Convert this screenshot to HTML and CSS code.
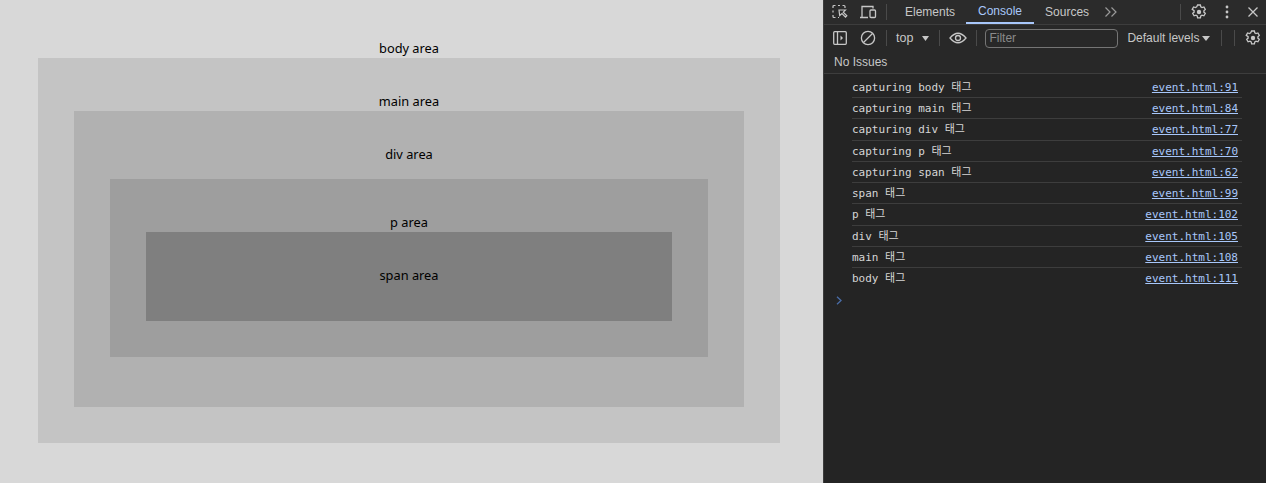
FILE: index.html
```html
<!DOCTYPE html>
<html lang="ko">
<head>
<meta charset="utf-8">
<title>event.html</title>
<link rel="stylesheet" href="styles.css">
</head>
<body>
<div class="page">
  <section class="box box-body">
    <div class="label">body area</div>
    <div class="box box-main">
      <div class="label">main area</div>
      <div class="box box-div">
        <div class="label">div area</div>
        <div class="box box-p">
          <div class="label">p area</div>
          <div class="box box-span"><div class="label">span area</div></div>
        </div>
      </div>
    </div>
  </section>
  <aside class="devtools">
    <div class="tabbar">
      <svg class="icon" width="18" height="18" viewBox="0 0 18 18"><path d="M2 5V3.500q0-1 1-1h1.500M7 2.500h2M11.500 2.500H13q1 0 1 1V5M2 7.500v2M2 12v1.500q0 1 1 1h1.500M7 14.500h1" fill="none" stroke="#c7c7c7" stroke-width="1.200"/><path d="M8 7h6.500l-2.200 2.200 3.500 3.600-1.300 1.300-3.500-3.600L8.700 12.500Z" fill="none" stroke="#c7c7c7" stroke-width="1.200"/></svg>
      <svg class="icon icon-device" width="18" height="18" viewBox="0 0 18 18"><path d="M1 14.500h8M3 14V3.500h11v2" fill="none" stroke="#c7c7c7" stroke-width="1.300"/><rect x="11" y="7" width="5.500" height="7.500" rx="1" fill="none" stroke="#c7c7c7" stroke-width="1.300"/></svg>
      <span class="vsep vsep-tabs"></span>
      <span class="tab tab-elements">Elements</span>
      <span class="tab tab-active">Console</span>
      <span class="tab tab-sources">Sources</span>
      <svg class="icon icon-more" width="14" height="12" viewBox="0 0 14 12"><path d="M1.500 1.500 6 6l-4.500 4.500M7.500 1.500 12 6l-4.500 4.500" fill="none" stroke="#9a9a9a" stroke-width="1.200"/></svg>
      <span class="spacer"></span>
      <span class="vsep"></span>
      <svg class="icon icon-gear1" width="16" height="16" viewBox="0 0 16 16"><path d="M6.600 1h2.800l.4 1.900 1.200.7 1.900-.6 1.400 2.400-1.400 1.300v1.400l1.400 1.300-1.400 2.400-1.900-.6-1.200.7-.4 1.900H6.600l-.4-1.900-1.200-.7-1.900.6-1.400-2.400 1.400-1.300V6.700L1.200 5.400 2.600 3l1.900.6 1.200-.7Z" fill="none" stroke="#c7c7c7" stroke-width="1.300"/><circle cx="8" cy="8" r="2.200" fill="#c7c7c7"/></svg>
      <svg class="icon icon-dots" width="4" height="14" viewBox="0 0 4 14"><circle cx="2" cy="2" r="1.400" fill="#c7c7c7"/><circle cx="2" cy="7" r="1.400" fill="#c7c7c7"/><circle cx="2" cy="12" r="1.400" fill="#c7c7c7"/></svg>
      <svg class="icon icon-close" width="12" height="12" viewBox="0 0 12 12"><path d="M1.500 1.500l9 9M10.500 1.500l-9 9" fill="none" stroke="#c7c7c7" stroke-width="1.300"/></svg>
    </div>
    <div class="toolbar">
      <svg class="icon icon-sidebar" width="14" height="14" viewBox="0 0 14 14"><rect x=".7" y=".7" width="12.600" height="12.600" rx="1" fill="none" stroke="#c7c7c7" stroke-width="1.300"/><path d="M4.500 1v12" stroke="#c7c7c7" stroke-width="1.300"/><path d="M7.500 4.500 10 7l-2.500 2.500Z" fill="#c7c7c7"/></svg>
      <svg class="icon icon-clear" width="16" height="16" viewBox="0 0 16 16"><circle cx="8" cy="8" r="6.600" fill="none" stroke="#c7c7c7" stroke-width="1.300"/><path d="M3.500 12.500l9-9" stroke="#c7c7c7" stroke-width="1.300"/></svg>
      <span class="vsep vsep-a"></span>
      <span class="top">top</span>
      <svg class="caret caret-top" width="7" height="5" viewBox="0 0 7 5"><path d="M0 0h7L3.500 5Z" fill="#c7c7c7"/></svg>
      <span class="vsep vsep-b"></span>
      <svg class="icon icon-eye" width="18" height="12" viewBox="0 0 18 12"><path d="M1 6q8-9.500 16 0-8 9.500-16 0Z" fill="none" stroke="#c7c7c7" stroke-width="1.300"/><circle cx="9" cy="6" r="2.500" fill="none" stroke="#c7c7c7" stroke-width="1.300"/></svg>
      <span class="vsep vsep-c"></span>
      <div class="filter">Filter</div>
      <span class="levels">Default levels</span>
      <svg class="caret caret-levels" width="8" height="5" viewBox="0 0 8 5"><path d="M0 0h8L4 5Z" fill="#c7c7c7"/></svg>
      <span class="vsep vsep-d"></span>
      <span class="vsep vsep-e"></span>
      <svg class="icon icon-gear2" width="16" height="16" viewBox="0 0 16 16"><path d="M6.600 1h2.800l.4 1.900 1.200.7 1.900-.6 1.400 2.400-1.400 1.300v1.400l1.400 1.300-1.400 2.400-1.900-.6-1.200.7-.4 1.900H6.600l-.4-1.900-1.200-.7-1.900.6-1.400-2.400 1.400-1.300V6.700L1.200 5.400 2.600 3l1.900.6 1.200-.7Z" fill="none" stroke="#c7c7c7" stroke-width="1.300"/><circle cx="8" cy="8" r="2.200" fill="#c7c7c7"/></svg>
    </div>
    <div class="issues">No Issues</div>
    <div class="log">
      <div class="row"><span>capturing body 태그</span><a class="src">event.html:91</a></div>
      <div class="row"><span>capturing main 태그</span><a class="src">event.html:84</a></div>
      <div class="row"><span>capturing div 태그</span><a class="src">event.html:77</a></div>
      <div class="row"><span>capturing p 태그</span><a class="src">event.html:70</a></div>
      <div class="row"><span>capturing span 태그</span><a class="src">event.html:62</a></div>
      <div class="row"><span>span 태그</span><a class="src">event.html:99</a></div>
      <div class="row"><span>p 태그</span><a class="src">event.html:102</a></div>
      <div class="row"><span>div 태그</span><a class="src">event.html:105</a></div>
      <div class="row"><span>main 태그</span><a class="src">event.html:108</a></div>
      <div class="row row-last"><span>body 태그</span><a class="src">event.html:111</a></div>
    </div>
    <svg class="prompt" width="6" height="9" viewBox="0 0 6 9"><path d="M1 .8 5 4.500 1 8.200" fill="none" stroke="#4a6da8" stroke-width="1.300"/></svg>
  </aside>
</div>
</body>
</html>
```

FILE: styles.css
```css
* { box-sizing: border-box; }
html, body { margin: 0; height: 100%; overflow: hidden; }
.page { display: flex; width: 1266px; height: 483px; }

.box-body {
  width: 823px;
  height: 483px;
  flex: none;
  background: #d8d8d8;
  padding: 40px 43px 0 38px;
}
.label {
  height: 18px;
  font: 12.8px/16px "Noto Sans", sans-serif;
  color: #000;
  text-align: center;
}
.box-main { background: #c4c4c4; height: 385px; padding: 35px 36px 36px; }
.box-div { background: #b1b1b1; height: 296px; padding: 35px 36px 50px; }
.box-div > .label { margin-bottom: 15px; }
.box-p { background: #9e9e9e; height: 178px; padding: 35px 36px 36px; }
.box-span { background: #7f7f7f; height: 89px; padding-top: 35px; }

.devtools {
  position: relative;
  width: 443px;
  flex: none;
  background: #242424;
  border-left: 1px solid #3d3d3d;
  color: #c7c7c7;
  font: 12px "Liberation Sans", sans-serif;
}
.tabbar {
  display: flex;
  align-items: center;
  height: 25px;
  background: #2b2b2b;
  border-bottom: 1px solid #3d3d3d;
  padding-left: 7px;
}
.icon { display: block; flex: none; }
.icon-device { margin-left: 10px; }
.vsep { display: block; width: 1px; height: 16px; background: #4a4a4a; flex: none; }
.vsep-tabs { margin-left: 9px; }
.tab { display: flex; align-items: center; height: 24px; font-size: 12px; color: #c7c7c7; }
.tab-elements { margin-left: 18px; }
.tab-active {
  margin-left: 11px;
  width: 68px;
  justify-content: center;
  color: #a8c7fa;
  border-bottom: 2px solid #a8c7fa;
}
.tab-sources { margin-left: 11px; }
.icon-more { margin-left: 15px; }
.spacer { flex: 1; }
.icon-gear1 { margin-left: 10px; }
.icon-dots { margin-left: 18px; }
.icon-close { margin-left: 18px; margin-right: 7px; }

.toolbar {
  display: flex;
  align-items: center;
  height: 25px;
  background: #282828;
  padding: 1px 0 0 9px;
}
.icon-clear { margin-left: 13px; }
.vsep-a { margin-left: 10px; }
.top { margin-left: 9px; font-size: 12.5px; }
.caret-top { margin-left: 9px; }
.vsep-b { margin-left: 10px; }
.icon-eye { margin-left: 9px; }
.vsep-c { margin-left: 9px; }
.filter {
  width: 133px;
  height: 19px;
  margin-left: 8px;
  padding-left: 3px;
  line-height: 17px;
  border: 1px solid #757575;
  border-radius: 4px;
  color: #8a8a8a;
  font-size: 12px;
}
.levels { margin-left: 9px; font-size: 12px; }
.caret-levels { margin-left: 3px; }
.vsep-d { margin-left: 11px; }
.vsep-e { margin-left: 12px; }
.icon-gear2 { margin-left: 10px; }

.issues {
  height: 24px;
  padding-left: 10px;
  line-height: 24px;
  background: #282828;
  border-bottom: 1px solid #3d3d3d;
  font-size: 12px;
}
.log { padding: 2.75px 24px 0 28px; font: 11px/14px "DejaVu Sans Mono", "Noto Sans CJK KR", monospace; color: #d6d6d6; }
.row {
  display: flex;
  justify-content: space-between;
  align-items: baseline;
  height: 21.25px;
  padding: 4px 4px 0 0;
  border-bottom: 1px solid #3d3d3d;
  white-space: pre;
}
.row span, .row a { line-height: 14px; height: 14px; }
.row-last { border-bottom: 0; }
.src { color: #a8c7fa; text-decoration: underline; }
.prompt { position: absolute; left: 12px; top: 296px; }
```
